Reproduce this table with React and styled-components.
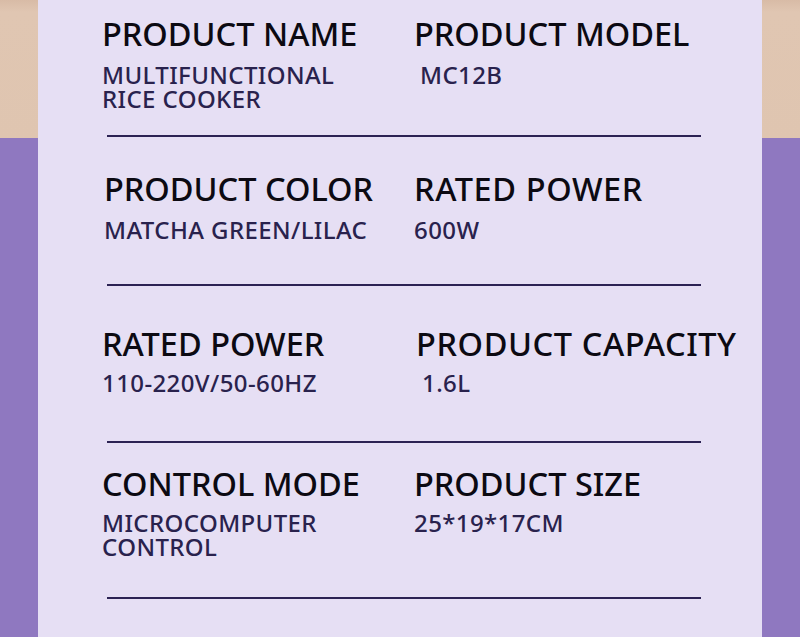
import React from "react";
import styled, { createGlobalStyle } from "styled-components";

const Global = createGlobalStyle`
  html, body { margin: 0; padding: 0; }
  body { font-family: "Noto Sans", "Open Sans", sans-serif; background: #e6dff4; }
`;

const Page = styled.div`
  display: flex;
  width: 800px;
  height: 637px;
  overflow: hidden;
`;

const Side = styled.div`
  width: 38px;
  flex: none;
  background: linear-gradient(
    to bottom,
    #d8bba6 0px,
    #e0c6b2 12px,
    #dfc5b0 138px,
    #8f78c0 138px,
    #8f78c0 100%
  );
`;

const Panel = styled.div`
  flex: 1;
  background: #e6dff4;
  display: flex;
  flex-direction: column;
`;

const Section = styled.section`
  height: ${(p) => p.$h}px;
  padding-top: ${(p) => p.$pt}px;
  box-sizing: border-box;
  display: grid;
  grid-template-columns: 312px 1fr;
  padding-left: 64px;
`;

const Cell = styled.div`
  display: flex;
  flex-direction: column;
  gap: ${(p) => p.$gap ?? 9}px;
  padding-left: ${(p) => p.$dx ?? 0}px;
`;

const Title = styled.div`
  font-size: 32.5px;
  font-weight: 500;
  line-height: 40px;
  letter-spacing: ${(p) => p.$ls ?? 0}px;
  color: #0c0a12;
  white-space: nowrap;
`;

const Value = styled.div`
  font-size: 24px;
  font-weight: 500;
  line-height: 24px;
  color: #29224d;
  white-space: pre-line;
  letter-spacing: 0.4px;
  padding-left: ${(p) => p.$dx ?? 0}px;
`;

const Divider = styled.div`
  margin-left: 69px;
  width: 594px;
  height: 2px;
  background: #2c2253;
  flex: none;
`;

const rows = [
  {
    h: 135, pt: 14, gap: 9,
    left: { t: "PRODUCT NAME", v: "MULTIFUNCTIONAL\nRICE COOKER" },
    right: { t: "PRODUCT MODEL", v: "MC12B", vdx: 6 },
  },
  {
    h: 147, pt: 32, gap: 9,
    left: { t: "PRODUCT COLOR", v: "MATCHA GREEN/LILAC", dx: 2 },
    right: { t: "RATED POWER", v: "600W", ls: 0.6 },
  },
  {
    h: 155, pt: 38, gap: 7,
    left: { t: "RATED POWER", v: "110-220V/50-60HZ" },
    right: { t: "PRODUCT CAPACITY", v: "1.6L", dx: 2, vdx: 6, ls: 0.6 },
  },
  {
    h: 154, pt: 21, gap: 7,
    left: { t: "CONTROL MODE", v: "MICROCOMPUTER\nCONTROL" },
    right: { t: "PRODUCT SIZE", v: "25*19*17CM" },
  },
];

export default function App() {
  return (
    <Page>
      <Global />
      <Side />
      <Panel>
        {rows.map((r, i) => (
          <React.Fragment key={i}>
            <Section $h={r.h} $pt={r.pt}>
              <Cell $gap={r.gap} $dx={r.left.dx}>
                <Title $ls={r.left.ls}>{r.left.t}</Title>
                <Value $dx={r.left.vdx}>{r.left.v}</Value>
              </Cell>
              <Cell $gap={r.gap} $dx={r.right.dx}>
                <Title $ls={r.right.ls}>{r.right.t}</Title>
                <Value $dx={r.right.vdx}>{r.right.v}</Value>
              </Cell>
            </Section>
            <Divider />
          </React.Fragment>
        ))}
      </Panel>
      <Side />
    </Page>
  );
}
